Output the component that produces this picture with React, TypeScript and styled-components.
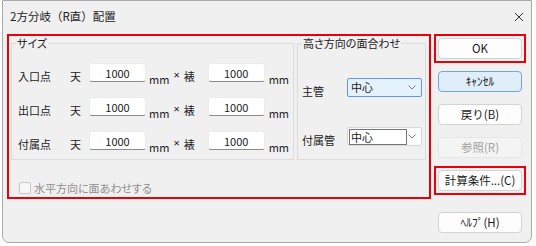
import React from 'react';
import styled, { createGlobalStyle } from 'styled-components';

const RED = '#e8000b';

const GlobalStyle = createGlobalStyle`
  html, body {
    margin: 0;
    padding: 0;
    background: #ffffff;
  }
  body {
    font-family: "Noto Sans CJK JP", "Noto Sans", sans-serif;
    font-size: 11px;
    color: #1b1b1b;
  }
`;

const Window = styled.div`
  box-sizing: border-box;
  margin-left: 2px;
  width: 530px;
  height: 243px;
  background: #f0f0f0;
  border: 1px solid #a9a9a9;
  border-radius: 0 0 7px 7px;
  font-feature-settings: "palt";
`;

const TitleBar = styled.div`
  height: 33px;
  display: flex;
  justify-content: space-between;
  align-items: flex-start;
  padding: 7px 7px 0 7px;
  box-sizing: border-box;
`;

const Title = styled.div`
  font-size: 11.5px;
  line-height: 16px;
  font-feature-settings: normal;
`;

const CloseIcon = styled.svg`
  margin-top: 4px;
`;

const Main = styled.div`
  display: flex;
  align-items: flex-start;
  gap: 3px;
  padding-left: 4px;
`;

const Panel = styled.div`
  box-sizing: border-box;
  width: 424px;
  height: 165px;
  border: 2px solid ${RED};
  padding: 1px 0 0 2px;
`;

const Groups = styled.div`
  display: flex;
  gap: 3px;
`;

const Group = styled.fieldset<{ $width: number; $pad: string }>`
  box-sizing: border-box;
  width: ${({ $width }) => $width}px;
  min-width: 0;
  margin: 0;
  padding: ${({ $pad }) => $pad};
  border: 1px solid #dcdcdc;
  display: flex;
  flex-direction: column;
`;

const Legend = styled.legend`
  margin-left: 4px;
  padding: 0 1px;
  font-size: 11px;
  line-height: 12px;
`;

const Rows = styled.div<{ $gap: number; $left: number }>`
  display: flex;
  flex-direction: column;
  gap: ${({ $gap }) => $gap}px;
  padding-left: ${({ $left }) => $left}px;
`;

const Row = styled.div`
  display: flex;
  align-items: flex-end;
  height: 19px;
`;

const Label = styled.span<{ $width: number }>`
  width: ${({ $width }) => $width}px;
  line-height: 16px;
  margin-bottom: -2px;
  white-space: nowrap;
`;

const Field = styled.input`
  box-sizing: border-box;
  width: 57px;
  height: 19px;
  padding: 0;
  border: 1px solid #ececec;
  border-bottom-color: #8c8c8c;
  border-radius: 3px;
  background: #ffffff;
  font-family: inherit;
  font-size: 11px;
  color: #1b1b1b;
  text-align: center;
  outline: none;
`;

const Unit = styled.span<{ $left: number }>`
  margin-left: ${({ $left }) => $left}px;
  line-height: 14px;
  margin-bottom: -4px;
`;

const Times = styled.span`
  margin-left: 4px;
  font-family: "Noto Sans", sans-serif;
  line-height: 16px;
  margin-bottom: -1px;
`;

const Dim = styled.span`
  width: 24px;
  margin-left: 4px;
  line-height: 16px;
  margin-bottom: -2px;
`;

const Combo = styled.div<{ $focused?: boolean }>`
  box-sizing: border-box;
  width: 75px;
  height: 19px;
  display: flex;
  align-items: center;
  justify-content: space-between;
  padding: ${({ $focused }) => ($focused ? '0 5px 0 3px' : '0 5px 0 1px')};
  border: 1px solid ${({ $focused }) => ($focused ? '#5b9be0' : '#d8d8d8')};
  border-radius: 2px;
  background: ${({ $focused }) => ($focused ? '#e5f1fb' : '#fbfbfb')};
`;

const ComboText = styled.span<{ $boxed?: boolean }>`
  box-sizing: border-box;
  line-height: 15px;
  ${({ $boxed }) =>
    $boxed &&
    `
    width: 58px;
    height: 16px;
    border: 1px solid #767676;
    background: #ffffff;
    padding-left: 1px;
  `}
`;

const CheckRow = styled.label`
  display: flex;
  align-items: center;
  gap: 3px;
  margin: 21px 0 0 8px;
  color: #8e8e8e;
  line-height: 14px;
`;

const CheckBox = styled.span`
  box-sizing: border-box;
  width: 12px;
  height: 12px;
  border: 1px solid #c9c9c9;
  border-radius: 2px;
  background: #f7f7f7;
`;

const Buttons = styled.div`
  display: flex;
  flex-direction: column;
  gap: 4px;
`;

const Slot = styled.div<{ $highlight?: boolean; $top?: number }>`
  box-sizing: border-box;
  width: 92px;
  padding: 2px;
  margin-top: ${({ $top }) => $top ?? 0}px;
  border: 2px solid ${({ $highlight }) => ($highlight ? RED : 'transparent')};
`;

const Button = styled.button<{ $primary?: boolean }>`
  box-sizing: border-box;
  width: 84px;
  height: 21px;
  padding: 0;
  border: 1px solid ${({ $primary }) => ($primary ? '#6fa6df' : '#d3d3d3')};
  border-radius: 4px;
  background: ${({ $primary }) => ($primary ? '#e0eef9' : '#fdfdfd')};
  font-family: inherit;
  font-size: 11.5px;
  line-height: 19px;
  color: #1b1b1b;
  font-feature-settings: normal;

  &:disabled {
    background: #f4f4f4;
    border-color: #e6e6e6;
    color: #a3a3a3;
  }
`;

const Chevron = () => (
  <svg width="8" height="5" viewBox="0 0 8 5">
    <path d="M0.5 0.5 L4 4 L7.5 0.5" fill="none" stroke="#7a7a7a" strokeWidth="1" />
  </svg>
);

const sizeRows = ['入口点', '出口点', '付属点'];

const SizeRow: React.FC<{ name: string }> = ({ name }) => (
  <Row>
    <Label $width={52}>{name}</Label>
    <Label $width={19}>天</Label>
    <Field defaultValue="1000" />
    <Unit $left={3}>mm</Unit>
    <Times>×</Times>
    <Dim>裱</Dim>
    <Field defaultValue="1000" />
    <Unit $left={4}>mm</Unit>
  </Row>
);

export default function App() {
  return (
    <>
      <GlobalStyle />
      <Window>
        <TitleBar>
          <Title>2方分岐（R直）配置</Title>
          <CloseIcon width="10" height="10" viewBox="0 0 10 10">
            <path d="M1 1 L9 9 M9 1 L1 9" stroke="#333" strokeWidth="1" />
          </CloseIcon>
        </TitleBar>
        <Main>
          <Panel>
            <Groups>
              <Group $width={283} $pad="14px 0 9px 0">
                <Legend>サイズ</Legend>
                <Rows $gap={15} $left={6}>
                  {sizeRows.map((r) => (
                    <SizeRow key={r} name={r} />
                  ))}
                </Rows>
              </Group>
              <Group $width={129} $pad="29px 0 0 0">
                <Legend>高さ方向の面合わせ</Legend>
                <Rows $gap={30} $left={4}>
                  <Row>
                    <Label $width={45}>主管</Label>
                    <Combo $focused>
                      <ComboText>中心</ComboText>
                      <Chevron />
                    </Combo>
                  </Row>
                  <Row>
                    <Label $width={45}>付属管</Label>
                    <Combo>
                      <ComboText $boxed>中心</ComboText>
                      <Chevron />
                    </Combo>
                  </Row>
                </Rows>
              </Group>
            </Groups>
            <CheckRow>
              <CheckBox />
              水平方向に面あわせする
            </CheckRow>
          </Panel>
          <Buttons>
            <Slot $highlight>
              <Button>OK</Button>
            </Slot>
            <Slot>
              <Button $primary>ｷｬﾝｾﾙ</Button>
            </Slot>
            <Slot>
              <Button>戻り(B)</Button>
            </Slot>
            <Slot>
              <Button disabled>参照(R)</Button>
            </Slot>
            <Slot $highlight>
              <Button>計算条件...(C)</Button>
            </Slot>
            <Slot $top={9}>
              <Button>ﾍﾙﾌﾟ(H)</Button>
            </Slot>
          </Buttons>
        </Main>
      </Window>
    </>
  );
}
